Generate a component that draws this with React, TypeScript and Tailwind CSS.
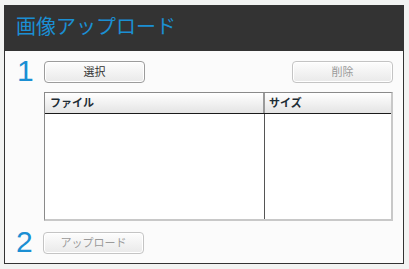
import React from "react";

const jp = { fontFamily: '"Liberation Sans", "Noto Sans CJK JP", sans-serif' };

function Btn({ label, disabled }: { label: string; disabled?: boolean }) {
  return (
    <button
      className={`w-[101px] h-[22px] rounded-[4px] border text-[11px] leading-none bg-gradient-to-b from-[#fdfdfd] to-[#e9e9e9] shadow-[inset_0_0_0_1px_#ffffff] ${
        disabled ? "border-[#c4c4c4] text-[#9a9a9a]" : "border-[#9c9c9c] text-[#333]"
      }`}
      style={jp}
    >
      {label}
    </button>
  );
}

export default function App() {
  return (
    <div className="w-[409px] h-[269px] bg-[#f2f3f2] pt-[5px] pl-[4px]" style={jp}>
      <div className="w-[400px] h-[259px] border border-[#333] bg-[#fbfbfb] flex flex-col">
        <div className="h-[45px] bg-[#333333] flex items-center pl-[11px] pb-[4px]">
          <h1 className="text-[20px] text-[#1b8fd3] leading-none">画像アップロード</h1>
        </div>

        <div className="flex flex-col pl-[11px] pr-[10px]">
          <div className="flex items-center mt-[10px] h-[22px]">
            <span className="w-[28px] text-[30px] leading-[22px] text-[#1b8fd3] pl-[1px] -mt-[2px]">1</span>
            <Btn label="選択" />
            <div className="flex-1" />
            <Btn label="削除" disabled />
          </div>

          <div className="ml-[28px] mt-[9px] h-[129px] flex flex-col border-t border-l border-[#8a8a8a] border-r-2 border-b-2 border-r-[#c8c8c8] border-b-[#c8c8c8] bg-white">
            <div className="flex h-[21px] border-b border-[#1a1a1a] bg-gradient-to-b from-[#ffffff] to-[#e4e4e4] text-[11px] font-bold text-[#1e2c35]">
              <div className="w-[218px] pl-[5px] flex items-center">ファイル</div>
              <div className="flex-1 border-l-2 border-[#9a9a9a] pl-[4px] flex items-center">サイズ</div>
            </div>
            <div className="flex flex-1">
              <div className="w-[219px]" />
              <div className="flex-1 border-l border-[#555]" />
            </div>
          </div>

          <div className="flex items-center mt-[11px] h-[22px]">
            <span className="w-[27px] text-[30px] leading-[22px] text-[#1b8fd3] -mt-[2px]">2</span>
            <Btn label="アップロード" disabled />
          </div>
        </div>
      </div>
    </div>
  );
}
